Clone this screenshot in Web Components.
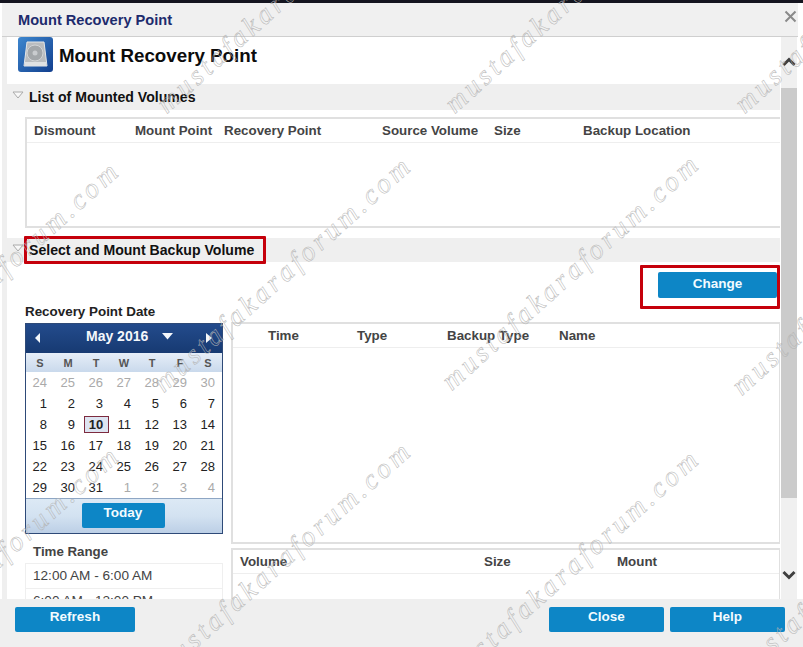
<!DOCTYPE html>
<html>
<head>
<meta charset="utf-8">
<title>Mount Recovery Point</title>
<style>
  html, body { margin: 0; padding: 0; background: #fff; }
  body { font-family: "Liberation Sans", Arial, sans-serif; }
</style>
</head>
<body>

<mount-dialog></mount-dialog>

<script>
// blue action button
class BlueButton extends HTMLElement {
    constructor() {
        super();
        this.attachShadow({ mode: 'open' });
        this.shadowRoot.innerHTML = `
            <style>
                :host { display: inline-flex; justify-content: center; box-sizing: border-box; height: 25px; padding-top: 1px;
                    background: #0d86c6; border-radius: 2px; color: #f2fbff; font: bold 13.500px "Liberation Sans", Arial, sans-serif; line-height: 18px; }
            </style>
            <slot></slot>
        `;
    }
}

// grey collapsible section header
class SectionBar extends HTMLElement {
    constructor() {
        super();
        this.attachShadow({ mode: 'open' });
        this.shadowRoot.innerHTML = `
            <style>
                :host { display: flex; align-items: center; position: relative; background: #efefef; padding-left: 5px;
                    font: bold 14.100px "Liberation Sans", Arial, sans-serif; color: #111; }
                svg { width: 12px; height: 8px; margin-right: 5px; margin-top: -5px; }
                .mark { display: none; position: absolute; left: 17px; top: -2px; width: 242px; height: 28px;
                    box-sizing: border-box; border: 3px solid #c5000b; border-radius: 1px; }
                :host([marked]) .mark { display: block; }
            </style>
            <svg viewBox="0 0 12 8"><path d="M1 1 H11 L6 7 Z" fill="#f8f8f8" stroke="#aaa"/></svg>
            <slot></slot>
            <div class="mark"></div>
        `;
    }
}

// table frame, header cells are passed in as spans
class DataTable extends HTMLElement {
    constructor() {
        super();
        this.attachShadow({ mode: 'open' });
        this.shadowRoot.innerHTML = `
            <style>
                :host { display: block; box-sizing: border-box; background: #fff; border: solid #e0e0e0; border-width: 2px 1px 2px 2px;
                    font: bold 13.350px "Liberation Sans", Arial, sans-serif; color: #444; }
                .head { display: grid; grid-template-columns: var(--cols); height: 24px; align-items: center; box-sizing: border-box;
                    padding-left: var(--pad); border-bottom: 1px solid #eee; }
            </style>
            <div class="head"><slot></slot></div>
        `;
    }
}

// month calendar
class CalendarPicker extends HTMLElement {
    constructor() {
        super();
        this.attachShadow({ mode: 'open' });

        const weekdays = ['S', 'M', 'T', 'W', 'T', 'F', 'S'];
        const days = [];
        [24, 25, 26, 27, 28, 29, 30].forEach(d => days.push(`<span class="off">${d}</span>`));
        for (let d = 1; d <= 31; d++) {
            days.push(d === 10 ? `<span class="sel"><b>${d}</b></span>` : `<span>${d}</span>`);
        }
        [1, 2, 3, 4].forEach(d => days.push(`<span class="off">${d}</span>`));

        this.shadowRoot.innerHTML = `
            <style>
                :host { display: block; box-sizing: border-box; width: 198px; height: 211px; border: 1px solid #2e4a78;
                    font: 13px "Liberation Sans", Arial, sans-serif; color: #222; background: #fff; }
                .top { display: flex; align-items: center; height: 29px; background: linear-gradient(#234b8c, #173a72); color: #f4f7fb;
                    font-weight: bold; font-size: 14px; position: relative; }
                .top svg { position: absolute; }
                .month { width: 100%; box-sizing: border-box; padding-left: 60px; margin-top: -5px; }
                .names { display: grid; grid-template-columns: repeat(7, 28px); height: 19px; align-items: center; text-align: center;
                    background: linear-gradient(#e6eef8, #c9d9ec); color: #555; font-size: 11px; font-weight: bold; }
                .days { display: grid; grid-template-columns: repeat(7, 28px); grid-auto-rows: 21px; align-items: center; justify-items: end; height: 126px; }
                .days span { padding-right: 7px; }
                .days .sel { justify-self: center; padding: 0; }
                .off { color: #aaa; }
                .sel { display: flex; width: 25px; height: 17px; box-sizing: border-box; align-items: center; justify-content: center;
                    background: #dde4f1; border: 1px solid #7d2b3f; }
                .foot { display: flex; justify-content: center; box-sizing: border-box; height: 35px; padding: 4px 2px 0 0;
                    border-top: 1px solid #8ea6c4; background: linear-gradient(#dce9f5, #d3e2f1 50%, #bccfe6); }
                blue-button { width: 83px; }
            </style>
            <div class="top">
                <svg style="left:9px;top:9px" width="6" height="10" viewBox="0 0 6 10"><path d="M5 0 V10 L0 5 Z" fill="#f4f7fb"/></svg>
                <div class="month">May 2016</div>
                <svg style="left:136px;top:9px" width="11" height="7" viewBox="0 0 11 7"><path d="M0 0 H11 L5.5 6.500 Z" fill="#f4f7fb"/></svg>
                <svg style="left:180px;top:9px" width="6" height="10" viewBox="0 0 6 10"><path d="M0 0 V10 L6 5 Z" fill="#f4f7fb"/></svg>
            </div>
            <div class="names">${weekdays.map(w => `<span>${w}</span>`).join('')}</div>
            <div class="days">${days.join('')}</div>
            <div class="foot"><blue-button>Today</blue-button></div>
        `;
    }
}

// the fake scrollbar on the right
class ScrollRail extends HTMLElement {
    constructor() {
        super();
        this.attachShadow({ mode: 'open' });
        this.shadowRoot.innerHTML = `
            <style>
                :host { display: flex; flex-direction: column; align-items: center; width: 16px; background: #f0f0f0; }
                svg { width: 14px; height: 10px; flex: none; }
                .up { margin-top: 20px; }
                .thumb { width: 16px; height: 410px; margin-top: 21px; background: #cbcbcb; flex: none; }
                .down { margin-top: 72px; }
            </style>
            <svg class="up" viewBox="0 0 14 10"><path d="M1.500 8 L7 2.500 L12.500 8" fill="none" stroke="#3f3f3f" stroke-width="3"/></svg>
            <div class="thumb"></div>
            <svg class="down" viewBox="0 0 14 10"><path d="M1.500 2 L7 7.500 L12.500 2" fill="none" stroke="#3f3f3f" stroke-width="3"/></svg>
        `;
    }
}

// hollow diagonal text lying over the whole dialog
class WaterMark extends HTMLElement {
    constructor() {
        super();
        this.attachShadow({ mode: 'open' });
        this.shadowRoot.innerHTML = `
            <style>
                :host { position: absolute; left: var(--x); top: var(--y); transform-origin: 0 100%; transform: translateY(-100%) rotate(-42deg);
                    font: italic 28px/28px "Liberation Serif", serif; letter-spacing: 3.850px; white-space: nowrap;
                    color: transparent; -webkit-text-stroke: 0.5px #b4b4b4; pointer-events: none; }
            </style>
            mustafakaraforum.com
        `;
    }
}

class MountDialog extends HTMLElement {
    constructor() {
        super();
        this.attachShadow({ mode: 'open' });

        const marks = [
            [170, 118], [458, 118], [748, 118],
            [-125, 402], [167, 397], [455, 395], [745, 400],
            [-125, 687], [167, 682], [455, 690], [745, 685]
        ];
        const marksHTML = marks.map(m => `<water-mark style="--x:${m[0]}px;--y:${m[1]}px"></water-mark>`).join('');

        this.shadowRoot.innerHTML = `
            <style>
                :host { display: flex; flex-direction: column; position: relative; overflow: hidden; width: 803px; height: 647px;
                    background: #fff; font-family: "Liberation Sans", Arial, sans-serif; }
                .strip { height: 3px; background: #14151f; flex: none; }
                .titlebar { display: flex; align-items: center; justify-content: space-between; height: 34px; flex: none; box-sizing: border-box;
                    margin-left: 2px; margin-right: 5px; padding: 0 1px 0 16px; background: #f0f0f0; border-bottom: 1px solid #cfcfcf;
                    font-weight: bold; font-size: 14.600px; color: #1d2b6d; }
                .titlebar svg { width: 13px; height: 13px; margin-top: -6px; }
                .main { display: flex; flex: 1; min-height: 0; margin-left: 2px; }
                .content { width: 773px; margin-left: 5px; margin-right: 1px; overflow: hidden; flex: none; background: #fff; }
                .left-edge { position: absolute; left: 2px; top: 37px; width: 5px; height: 562px; background: #efefef; }
                .heading { display: flex; align-items: flex-start; height: 47px; padding-left: 11px; gap: 6px;
                    font-weight: bold; font-size: 18.750px; color: #0c0c0c; }
                .heading span { margin-top: 8px; }
                .bar1 { height: 26px; }
                .bar2 { height: 24px; margin-top: 10px; }
                .mounted { height: 111px; margin: 7px 0 0 18px; border-right: none; --cols: 101px 89px 158px 112px 89px 1fr; --pad: 7px; }
                .change-row { display: flex; justify-content: flex-end; padding: 10px 3px 0 0; }
                .change-box { position: relative; display: flex; }
                .change-box blue-button { width: 119px; height: 26px; padding-top: 3px; }
                .change-box i { position: absolute; left: -18px; top: -7px; width: 140px; height: 44px; box-sizing: border-box;
                    border: 3px solid #c5000b; border-radius: 1px; }
                .lower { display: grid; grid-template-columns: 198px 549px; column-gap: 8px; margin: 6px 0 0 18px; }
                .date-label { font-weight: bold; font-size: 13.400px; color: #222; height: 19px; line-height: 15px; }
                .range-label { font-weight: bold; font-size: 13.300px; color: #444; margin: 10px 0 0 8px; line-height: 16px; height: 19px; }
                .ranges { border: 1px solid #efefef; }
                .ranges div { height: 24px; line-height: 24px; padding-left: 7px; font-size: 13.600px; color: #444; border-bottom: 1px solid #efefef; }
                .right { padding-top: 18px; }
                .points { height: 222px; --cols: 89px 90px 112px 1fr; --pad: 35px; }
                .volumes { margin-top: 4px; height: 120px; --cols: 244px 133px 1fr; --pad: 7px; }
                .footer { display: flex; height: 48px; flex: none; box-sizing: border-box; padding: 8px 18px 0 15px; background: #efefef; gap: 6px; }
                .footer blue-button { width: 115px; }
                .footer blue-button:first-child { width: 120px; margin-right: auto; }
            </style>
            <div class="strip"></div>
            <div class="titlebar">
                <span>Mount Recovery Point</span>
                <svg viewBox="0 0 13 13"><path d="M1.500 1.500 L11.500 11.500 M11.500 1.500 L1.500 11.500" stroke="#8a8a8a" stroke-width="2" fill="none"/></svg>
            </div>
            <div class="left-edge"></div>
            <div class="main">
                <div class="content">
                    <div class="heading">
                        <svg width="35" height="35" viewBox="0 0 35 35">
                            <defs><linearGradient id="drive" x1="0" y1="0" x2="1" y2="1"><stop offset="0" stop-color="#3d87cf"/><stop offset="1" stop-color="#123f8e"/></linearGradient></defs>
                            <rect width="35" height="35" rx="3" fill="url(#drive)"/>
                            <path d="M9 5 H26 L29 29 H6 Z" fill="#b9bcbf" stroke="#e4e6e8"/>
                            <circle cx="17" cy="16" r="8" fill="#a3a7aa" stroke="#d3d5d7"/>
                            <circle cx="17" cy="16" r="2.500" fill="#c9cccf"/>
                            <rect x="7" y="25" width="21" height="4" fill="#dfe1e3"/>
                        </svg>
                        <span>Mount Recovery Point</span>
                    </div>
                    <section-bar class="bar1">List of Mounted Volumes</section-bar>
                    <data-table class="mounted">
                        <span>Dismount</span><span>Mount Point</span><span>Recovery Point</span><span>Source Volume</span><span>Size</span><span>Backup Location</span>
                    </data-table>
                    <section-bar class="bar2" marked>Select and Mount Backup Volume</section-bar>
                    <div class="change-row"><div class="change-box"><blue-button>Change</blue-button><i></i></div></div>
                    <div class="lower">
                        <div>
                            <div class="date-label">Recovery Point Date</div>
                            <calendar-picker></calendar-picker>
                            <div class="range-label">Time Range</div>
                            <div class="ranges"><div>12:00 AM - 6:00 AM</div><div>6:00 AM - 12:00 PM</div></div>
                        </div>
                        <div class="right">
                            <data-table class="points"><span>Time</span><span>Type</span><span>Backup Type</span><span>Name</span></data-table>
                            <data-table class="volumes"><span>Volume</span><span>Size</span><span>Mount</span></data-table>
                        </div>
                    </div>
                </div>
                <scroll-rail></scroll-rail>
            </div>
            <div class="footer">
                <blue-button>Refresh</blue-button>
                <blue-button>Close</blue-button>
                <blue-button>Help</blue-button>
            </div>
            ${marksHTML}
        `;
    }
}

customElements.define('blue-button', BlueButton);
customElements.define('section-bar', SectionBar);
customElements.define('data-table', DataTable);
customElements.define('calendar-picker', CalendarPicker);
customElements.define('scroll-rail', ScrollRail);
customElements.define('water-mark', WaterMark);
customElements.define('mount-dialog', MountDialog);
</script>
</body>
</html>
